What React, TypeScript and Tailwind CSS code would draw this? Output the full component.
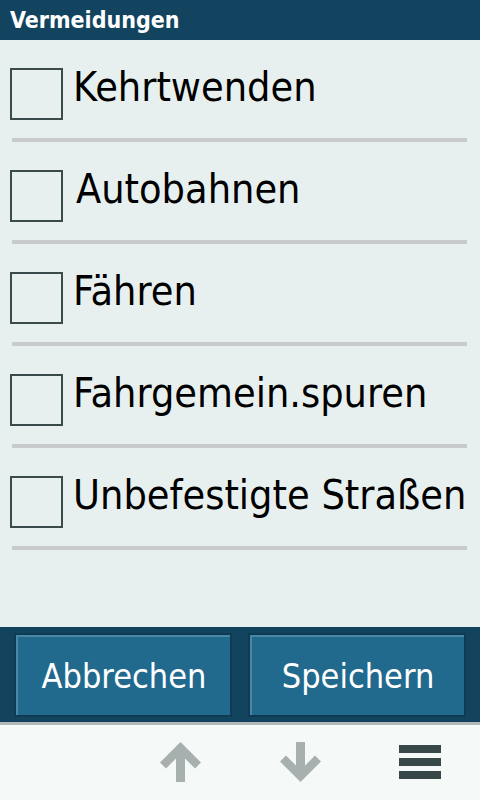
import React from 'react'

const items = ['Kehrtwenden', 'Autobahnen', 'Fähren', 'Fahrgemein.spuren', 'Unbefestigte Straßen']

const font = "font-['DejaVu_Sans_Condensed','DejaVu_Sans',sans-serif] font-stretch-condensed"

const ArrowUp = () => (
  <svg width="41" height="40" viewBox="0 0 41 40">
    <polygon
      fill="#a8b0af"
      points="20.5,0 41,20.5 35,26.5 25,16.5 25,40 16,40 16,16.5 6,26.5 0,20.5"
    />
  </svg>
)

const ArrowDown = () => (
  <svg width="41" height="40" viewBox="0 0 41 40">
    <polygon
      fill="#a8b0af"
      points="20.5,40 41,19.5 35,13.5 25,23.5 25,0 16,0 16,23.5 6,13.5 0,19.5"
    />
  </svg>
)

export default function App() {
  return (
    <div className={`flex h-[800px] w-[480px] flex-col overflow-hidden ${font}`}>
      {/* title bar */}
      <div className="flex h-[40px] shrink-0 items-center bg-[#12435f] px-[10px]">
        <span className="text-[23px] font-bold leading-none text-white">Vermeidungen</span>
      </div>

      {/* list */}
      <div className="flex-1 bg-[#e8f0ef] pl-[10px]">
        {items.map((label, i) => (
          <div key={label} className="pt-[28px]">
            <div className="flex items-start">
              <div className="h-[52px] w-[53px] shrink-0 border-2 border-[#3b4b4c]" />
              <span
                className={`${i === 1 ? 'ml-[13px]' : 'ml-[10px]'} whitespace-nowrap text-[41px] leading-[39px] text-black`}
              >
                {label}
              </span>
            </div>
            <div className="ml-[2px] mt-[18px] h-[4px] w-[455px] bg-[#c8cacd]" />
          </div>
        ))}
      </div>

      {/* action bar */}
      <div className="flex h-[95px] shrink-0 gap-[20px] bg-[#12435f] px-[16px] pt-[8px]">
        {['Abbrechen', 'Speichern'].map((b) => (
          <button
            key={b}
            className="flex h-[80px] w-[214px] items-center justify-center border-l-2 border-t-2 border-[#4a87a7] bg-[#216a8e] text-[34px] leading-none text-white shadow-[0_0_0_2px_#0e3a52]"
          >
            {b}
          </button>
        ))}
      </div>
      <div className="h-[3px] shrink-0 bg-[#b3b8b8]" />

      {/* footer */}
      <div className="grid h-[75px] shrink-0 grid-cols-4 items-center bg-[#f5faf8] pb-[2px]">
        <div />
        <div className="flex justify-center">
          <ArrowUp />
        </div>
        <div className="flex justify-center">
          <ArrowDown />
        </div>
        <div className="flex justify-center">
          <div className="flex w-[42px] flex-col gap-[5px]">
            <div className="h-[8px] bg-[#384747]" />
            <div className="h-[8px] bg-[#384747]" />
            <div className="h-[8px] bg-[#384747]" />
          </div>
        </div>
      </div>
    </div>
  )
}
